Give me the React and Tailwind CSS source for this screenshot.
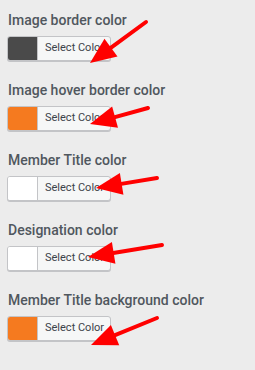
import React from 'react';

const fields = [
  { label: 'Image border color', color: '#4a4a4a' },
  { label: 'Image hover border color', color: '#f57a1f' },
  { label: 'Member Title color', color: '#ffffff' },
  { label: 'Designation color', color: '#ffffff' },
  { label: 'Member Title background color', color: '#f57a1f' },
];

// annotation arrows: [startX, startY, tipX, tipY]
const arrows = [
  [146, 22, 90, 63],
  [148, 108, 90, 124],
  [157, 178, 96, 188],
  [162, 245, 88, 257],
  [157, 318, 91, 345],
];

function Arrow({ x1, y1, x2, y2 }) {
  const dx = x2 - x1;
  const dy = y2 - y1;
  const len = Math.hypot(dx, dy);
  const ux = dx / len;
  const uy = dy / len;
  const headLen = 26;
  const headW = 11;
  const bx = x2 - ux * headLen;
  const by = y2 - uy * headLen;
  const p1 = `${bx - uy * headW},${by + ux * headW}`;
  const p2 = `${bx + uy * headW},${by - ux * headW}`;
  return (
    <g>
      <line x1={x1} y1={y1} x2={bx + ux * 2} y2={by + uy * 2} stroke="#ff0000" strokeWidth="4" strokeLinecap="round" />
      <polygon points={`${x2},${y2} ${p1} ${p2}`} fill="#ff0000" />
    </g>
  );
}

export default function App() {
  return (
    <div className="relative w-[255px] h-[370px] bg-[#ececec] overflow-hidden font-['Roboto',sans-serif]">
      <div className="flex flex-col gap-[19px] pt-[10px] pl-[7px]">
        {fields.map((f) => (
          <div key={f.label} className="flex flex-col gap-[6px]">
            <div className="pl-[1px] text-[14px] leading-[20px] font-medium text-[#50575e]">{f.label}</div>
            <button className="flex w-[104px] h-[25px] rounded-[3px] border border-[#c3c4c7] bg-[#f6f7f7] overflow-hidden shadow-[0_1px_0_#c3c4c7]">
              <span className="w-[30px] h-full border-r border-[#c3c4c7]" style={{ backgroundColor: f.color }} />
              <span className="flex-1 flex items-center pl-[7px] text-[11px] text-[#3c434a] whitespace-nowrap">Select Color</span>
            </button>
          </div>
        ))}
      </div>
      <svg className="absolute inset-0 pointer-events-none" width="255" height="370">
        {arrows.map((a, i) => (
          <Arrow key={i} x1={a[0]} y1={a[1]} x2={a[2]} y2={a[3]} />
        ))}
      </svg>
    </div>
  );
}
